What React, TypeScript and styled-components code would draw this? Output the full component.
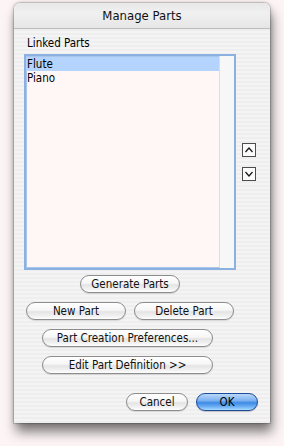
import React from 'react';
import styled, { createGlobalStyle, css } from 'styled-components';

const GlobalStyle = createGlobalStyle`
  html, body {
    margin: 0;
    padding: 0;
    background: #fdf5f5;
  }
  body {
    font-family: "DejaVu Sans Condensed", "Liberation Sans", sans-serif;
    font-size: 11.5px;
    color: #000;
  }
`;

const Page = styled.div`
  width: 284px;
  height: 446px;
  padding: 3px 0 0 14px;
  box-sizing: border-box;
`;

const Window = styled.div`
  width: 256px;
  height: 420px;
  border-radius: 6px 6px 0 0;
  overflow: hidden;
  display: flex;
  flex-direction: column;
  background: repeating-linear-gradient(
    to bottom,
    #f4f4f4 0px,
    #f4f4f4 2px,
    #eeeeee 2px,
    #eeeeee 4px
  );
  box-shadow: 0 0 0 1px rgba(0, 0, 0, 0.12), 0 0 4px rgba(0, 0, 0, 0.25),
    2px 9px 12px rgba(0, 0, 0, 0.5);
`;

const TitleBar = styled.div`
  height: 25px;
  flex: none;
  display: flex;
  align-items: center;
  justify-content: center;
  font-size: 13px;
  color: #111;
  border-bottom: 1px solid #bdbdbd;
  background: linear-gradient(to bottom, #e8e8e8 0%, #f0f0f0 40%, #e6e6e6 100%);
`;

const Body = styled.div`
  flex: 1;
  padding: 8px 12px 0 10px;
  display: flex;
  flex-direction: column;
`;

const Label = styled.div`
  line-height: 13px;
  height: 13px;
  padding-left: 3px;
`;

const ListRow = styled.div`
  margin-top: 4px;
  display: flex;
  align-items: center;
`;

const ListBox = styled.div`
  width: 212px;
  height: 216px;
  box-sizing: border-box;
  border: 2px solid #8bb1e2;
  box-shadow: inset 0 0 0 1px #a9c5ea;
  display: flex;
  background: #fff6f6;
`;

const Rows = styled.div`
  flex: 1;
  display: flex;
  flex-direction: column;
  padding-top: 1px;
`;

const Row = styled.div<{ $selected?: boolean }>`
  height: 14px;
  line-height: 14px;
  padding-left: 1px;
  background: ${(p) => (p.$selected ? '#b5d4fd' : 'transparent')};
`;

const ScrollTrack = styled.div`
  width: 14px;
  flex: none;
  background: #f7f7f7;
  border-left: 1px solid #dedede;
`;

const ArrowCol = styled.div`
  margin-left: 6px;
  display: flex;
  flex-direction: column;
  gap: 10px;
`;

const ArrowBtn = styled.div`
  width: 14px;
  height: 14px;
  box-sizing: border-box;
  border: 1px solid #4d4d4d;
  background: #fbfbfb;
  display: flex;
  align-items: center;
  justify-content: center;
`;

const Actions = styled.div`
  width: 212px;
  margin-top: 5px;
  display: flex;
  flex-direction: column;
  align-items: center;
  gap: 9px;
`;

const Pair = styled.div`
  display: flex;
  gap: 8px;
`;

const pill = css`
  height: 18px;
  box-sizing: border-box;
  border-radius: 9px;
  display: flex;
  align-items: center;
  justify-content: center;
  font-family: inherit;
  font-size: 11.5px;
  padding: 0;
  white-space: nowrap;
`;

const PushButton = styled.div<{ $w: number; $shift?: number }>`
  ${pill};
  width: ${(p) => p.$w}px;
  margin-right: ${(p) => p.$shift || 0}px;
  color: #111;
  border: 1px solid #8c8c8c;
  background: linear-gradient(
    to bottom,
    #ffffff 0%,
    #f6f6f6 45%,
    #e4e4e4 55%,
    #f3f3f3 85%,
    #ffffff 100%
  );
  box-shadow: 0 1px 1px rgba(0, 0, 0, 0.12);
`;

const DefaultButton = styled.div<{ $w: number }>`
  ${pill};
  width: ${(p) => p.$w}px;
  color: #000;
  border: 1px solid #1e4a99;
  background: linear-gradient(
    to bottom,
    #b9d8fb 0%,
    #7fb2f0 40%,
    #3d8ae6 55%,
    #6fb0f5 80%,
    #a9dcff 100%
  );
  box-shadow: 0 1px 1px rgba(0, 0, 0, 0.2);
`;

const Footer = styled.div`
  margin-top: 19px;
  display: flex;
  justify-content: flex-end;
  gap: 8px;
`;

const Chevron = ({ up }: { up?: boolean }) => (
  <svg width="10" height="10" viewBox="0 0 10 10">
    <path
      d={up ? 'M1.5 7 L5 3 L8.5 7' : 'M1.5 3 L5 7 L8.5 3'}
      fill="none"
      stroke="#1a1a1a"
      strokeWidth="1.3"
    />
  </svg>
);

export default function App() {
  const parts = ['Flute', 'Piano'];

  return (
    <Page>
      <GlobalStyle />
      <Window>
        <TitleBar>Manage Parts</TitleBar>
        <Body>
          <Label>Linked Parts</Label>
          <ListRow>
            <ListBox>
              <Rows>
                {parts.map((name, i) => (
                  <Row key={name} $selected={i === 0}>
                    {name}
                  </Row>
                ))}
              </Rows>
              <ScrollTrack />
            </ListBox>
            <ArrowCol>
              <ArrowBtn>
                <Chevron up />
              </ArrowBtn>
              <ArrowBtn>
                <Chevron />
              </ArrowBtn>
            </ArrowCol>
          </ListRow>
          <Actions>
            <PushButton $w={100}>Generate Parts</PushButton>
            <Pair>
              <PushButton $w={100}>New Part</PushButton>
              <PushButton $w={100}>Delete Part</PushButton>
            </Pair>
            <PushButton $w={171} $shift={5}>
              Part Creation Preferences...
            </PushButton>
            <PushButton $w={171} $shift={5}>
              Edit Part Definition &gt;&gt;
            </PushButton>
          </Actions>
          <Footer>
            <PushButton $w={62}>Cancel</PushButton>
            <DefaultButton $w={62}>OK</DefaultButton>
          </Footer>
        </Body>
      </Window>
    </Page>
  );
}
